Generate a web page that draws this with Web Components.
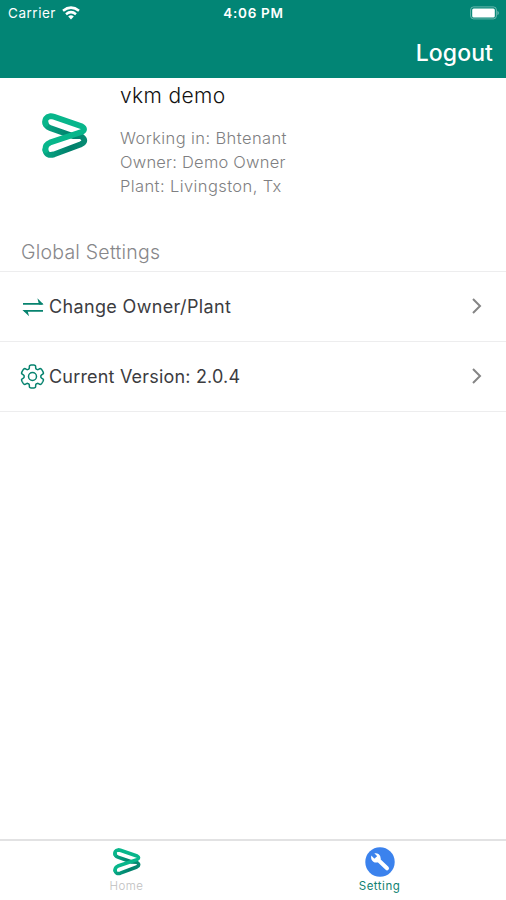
<!DOCTYPE html>
<html lang="en"><head><meta charset="utf-8"><title>Settings</title>
<style>html,body{margin:0;height:100%;background:#fff;font-family:Inter,"Liberation Sans",sans-serif}</style></head>
<body><settings-app></settings-app>
<script>
const define=(name,html)=>{const t=document.createElement('template');t.innerHTML=html;
customElements.define(name,class extends HTMLElement{constructor(){super();this.attachShadow({mode:'open'}).append(t.content.cloneNode(true));}});};

define('brand-logo',`<style>:host{display:block}svg{display:block;width:100%;height:100%}</style>
<svg viewBox="0 0 46 46" fill="none" stroke-linecap="round" stroke-linejoin="round" stroke-width="5.8">
<defs><linearGradient id="d" x1="0" x2="1"><stop stop-color="#08a482"/><stop offset=".65" stop-color="#007f6b"/><stop offset="1" stop-color="#078a72"/></linearGradient></defs>
<path stroke="url(#d)" d="M3.4 9Q3.4 13.4 8 15L25 21L31 23L39 23.2Q45.6 28 39 31.2L12 41.4Q4.5 43.6 3.4 37"/>
<path stroke="#08b68b" d="M3.4 11Q2 4.2 8.5 3.1Q10 3 12 3.7L39.5 13.2Q44.6 16.2 39.5 19L8 29.6Q3 31.6 3.4 37"/>
</svg>`);

define('status-bar',`<style>:host{display:grid;grid-template-columns:1fr auto 1fr;align-items:center;height:26px;padding:0 7px 0 8px;color:#fff;box-sizing:border-box}
.l{display:flex;align-items:center;gap:6px;font-size:13.5px;letter-spacing:.53px}.t{font-size:13.5px;font-weight:600;letter-spacing:.7px}.b{justify-self:end;display:block}.l svg{margin-top:-1px}</style>
<div class="l"><span>Carrier</span><svg width="18" height="14" viewBox="0 0 18 14" fill="none" stroke="#fff" stroke-width="2.5"><path d="M1 4.8Q9-1.5 17 4.8M4 8.2Q9 4 14 8.2"/><path d="M6.2 10.4Q9 8 11.8 10.4L9 13.5Z" fill="#fff" stroke="none"/></svg></div>
<span class="t">4:06 PM</span>
<svg class="b" width="30" height="14" viewBox="0 0 30 14"><rect x="1.6" y=".9" width="25.8" height="12" rx="3" fill="none" stroke="#fff" stroke-opacity=".4"/><rect x="3.2" y="2.4" width="22.6" height="9.2" rx="1.5" fill="#fff"/><path d="M28.5 4.7Q31 6.9 28.5 9.2Z" fill="#fff" opacity=".5"/></svg>`);

define('nav-bar',`<style>:host{display:flex;flex-direction:column;height:78px;background:#028575;color:#fff}
div{flex:1;display:flex;justify-content:flex-end;align-items:center;padding:1px 13px 0 0;font-size:23px;font-weight:500;letter-spacing:.1px}</style>
<status-bar></status-bar><div><span>Logout</span></div>`);

define('profile-card',`<style>:host{display:flex;height:156px;box-sizing:border-box;padding:4px 0 0 42px}
brand-logo{width:46px;height:46px;margin:31px 32px 0 0}
h1{margin:0;font-size:21px;line-height:28px;font-weight:300;color:#111;letter-spacing:.37px}
p{margin:0;font-size:16.5px;line-height:24.3px;font-weight:300;color:#7f7f82;letter-spacing:.4px;white-space:nowrap}
p.o{letter-spacing:.22px}
.d{margin-top:15.5px}</style><brand-logo></brand-logo><div><h1>vkm demo</h1><div class="d"><p>Working in: Bhtenant</p><p class="o">Owner: Demo Owner</p><p>Plant: Livingston, Tx</p></div></div>`);

define('section-title',`<style>:host{display:block;height:37px;box-sizing:border-box;padding:5px 0 0 21px;font-size:19.5px;line-height:26px;color:#87878a;font-weight:300;letter-spacing:.22px}</style><slot></slot>`);

define('settings-row',`<style>:host{display:flex;align-items:center;height:70px;box-sizing:border-box;padding:0 23px 1px 20px;border-top:1.5px solid #ededee;color:#3c3c3f}
.x{flex:1;margin-left:4px;font-size:18px;letter-spacing:var(--track,.35px);white-space:nowrap}
::slotted(svg){display:block;flex:none}</style>
<slot name="icon"></slot><span class="x"><slot></slot></span>
<svg width="12" height="18" viewBox="0 0 12 18" fill="none" stroke="#858585" stroke-width="2"><path d="M2 2L9 9L2 16"/></svg>`);

define('tab-item',`<style>:host{display:flex;flex:1;flex-direction:column;align-items:center;padding-top:5px;font-size:11.5px;line-height:14px;letter-spacing:.5px}
.i{height:33px;display:flex;align-items:center}::slotted(svg),::slotted(brand-logo){margin-top:-2px}</style><div class="i"><slot name="icon"></slot></div><slot></slot>`);

define('tab-bar',`<style>:host{display:flex;height:61px;box-sizing:border-box;border-top:2px solid #e2e2e3;background:#fff}
.h{color:#bebec0;font-weight:300}.s{color:#128272}brand-logo{width:28px;height:28px}</style>
<tab-item class="h"><brand-logo slot="icon"></brand-logo>Home</tab-item>
<tab-item class="s"><svg slot="icon" width="30" height="30" viewBox="0 0 30 30"><circle cx="15" cy="15" r="14.7" fill="#3b82ed"/><path d="M12 11.8L22 21.3" stroke="#fff" stroke-width="4" stroke-linecap="round"/><path d="M6.3 8.4Q5.4 12.6 8.3 14.7Q10.3 16 12.5 15.4L15.8 12Q16.1 9 13.8 7.2Q11.8 5.8 9.3 6.3L12 9.1L11.3 11L9.2 11.5Z" fill="#fff"/></svg>Setting</tab-item>`);

const gear=(()=>{let s='';for(let i=0;i<=144;i++){const a=i*Math.PI/72,c=Math.cos(a*6),r=9.9+1.6*Math.tanh(c*3.2+1.2);s+=(i?'L':'M')+(12.5+r*Math.sin(a)).toFixed(2)+' '+(12.5-r*Math.cos(a)).toFixed(2);}return s+'Z';})();
define('settings-app',`<style>:host{display:flex;flex-direction:column;height:900px;width:506px}
.v{--track:.19px}
.e{flex:1;border-top:1.5px solid #ededee}</style>
<nav-bar></nav-bar><profile-card></profile-card><section-title>Global Settings</section-title>
<settings-row><svg slot="icon" width="25" height="25" viewBox="0 0 25 25" fill="none" stroke="#07836f"><path stroke-width="1.7" d="M3 9.8H22.5M23 16.8H4"/><path stroke="none" fill="#07836f" d="M17.4 4.3L23.6 10.6H19ZM9.1 22.3L2.4 16H7.3Z"/></svg>Change Owner/Plant</settings-row>
<settings-row class="v"><svg slot="icon" width="25" height="25" viewBox="0 0 25 25" fill="none" stroke="#07836f" stroke-width="1.5"><path d="${gear}"/><circle cx="12.5" cy="12.5" r="4"/></svg>Current Version: 2.0.4</settings-row>
<div class="e"></div><tab-bar></tab-bar>`);
</script></body></html>
